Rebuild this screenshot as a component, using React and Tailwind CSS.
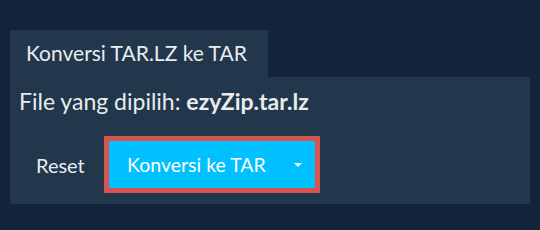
export default function App() {
  return (
    <div className="w-[540px] h-[230px] bg-[#12233a] pt-[30px] px-[10px] text-[#e9ecef]" style={{ fontFamily: 'Lato, "Open Sans", sans-serif' }}>
      <div className="flex">
        <div className="bg-[#22364c] h-[47px] w-[258px] flex items-center pl-[16px] pb-[2px] text-[21px]">
          Konversi TAR.LZ ke TAR
        </div>
      </div>
      <div className="bg-[#22364c] h-[127px] pl-[9px] pt-[8px]">
        <div className="text-[23px] leading-[32px]">
          File yang dipilih: <span className="font-bold">ezyZip.tar.lz</span>
        </div>
        <div className="flex items-center mt-[19px]">
          <span className="w-[85px] pl-[17px] text-[20px] leading-none">Reset</span>
          <div className="border-[5px] border-[#d9534f]">
            <div className="bg-[#00c0ff] w-[206px] h-[47px] flex items-center pl-[18px] pr-[13px] text-white text-[19.5px]">
              <span className="flex-1">Konversi ke TAR</span>
              <svg width="8" height="4" viewBox="0 0 8 4" fill="white"><path d="M0 0h8L4 4z" /></svg>
            </div>
          </div>
        </div>
      </div>
    </div>
  );
}
